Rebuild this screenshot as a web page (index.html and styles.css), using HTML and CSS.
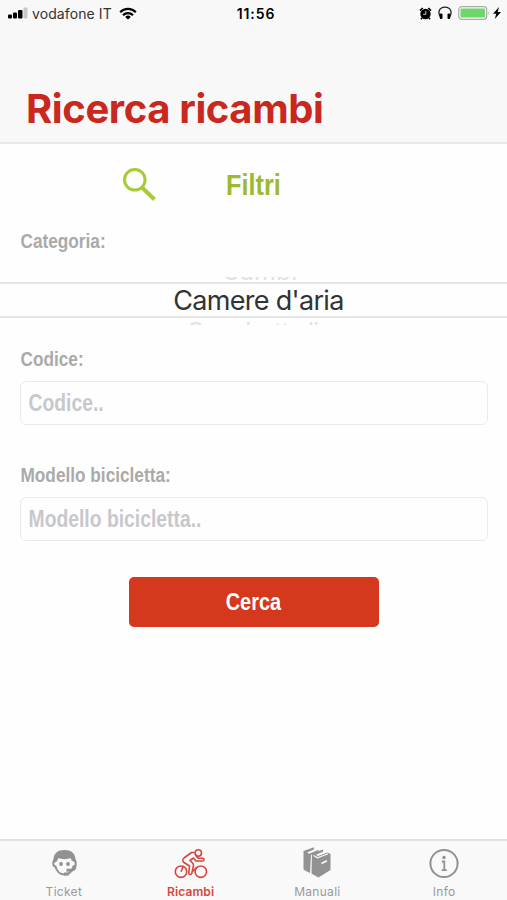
FILE: index.html
```html
<!DOCTYPE html>
<html lang="it">
<head>
  <meta charset="UTF-8">
  <title>Ricerca ricambi</title>
  <link rel="stylesheet" href="styles.css">
</head>
<body>

<div class="app">
  <header class="header">
    <div class="status-bar">
      <div class="status-left">
        <svg width="20" height="12" viewBox="0 0 20 12">
          <rect x="0" y="7.5" width="4" height="4" rx="1"/>
          <rect x="5" y="5.5" width="4" height="6" rx="1"/>
          <rect x="10" y="3" width="4.500" height="8.500" rx="1"/>
          <rect x="15.500" y="0.500" width="4" height="11" rx="1" fill="#c8c8c8"/>
        </svg>
        <span class="carrier">vodafone IT</span>
        <svg width="18" height="13" viewBox="0 0 18 13" fill="none" stroke="#000" stroke-width="2.200">
          <path d="M1.200 5.200a11 11 0 0 1 15.600 0M4 8.200a7 7 0 0 1 10 0"/>
          <path d="M9 12.500L6.200 9.900a4 4 0 0 1 5.600 0z" fill="#000" stroke="none"/>
        </svg>
      </div>
      <span class="time">11:56</span>
      <div class="status-right">
        <svg width="13" height="13" viewBox="0 0 13 13">
          <circle cx="6.500" cy="7" r="5.200"/>
          <path d="M1 3.700L3.700 1M12 3.700L9.300 1M3 11l-1 1.200M10 11l1 1.200" stroke="#000" stroke-width="1.700"/>
          <path d="M6.800 4v3.300H4.200" fill="none" stroke="#ccc"/>
        </svg>
        <svg width="14" height="14" viewBox="0 0 14 14">
          <path d="M2.800 12C-1 6 1.500 1.200 7 1.200S15 6 11.200 12" fill="none" stroke="#222" stroke-width="1.300"/>
          <rect x="1.800" y="7.500" width="2.700" height="5.500" rx="1"/>
          <rect x="9.500" y="7.500" width="2.700" height="5.500" rx="1"/>
        </svg>
        <svg class="battery" width="32" height="14" viewBox="0 0 32 14">
          <rect x="0.700" y="0.700" width="28" height="12.600" rx="3" fill="#f8f8f8" stroke="#aaa" stroke-width="1.200"/>
          <rect x="2.500" y="2.500" width="24.500" height="9" rx="1" fill="#6fd66b"/>
          <path d="M30 5q1.800 2 0 4z" fill="#aaa"/>
        </svg>
        <svg width="8" height="12" viewBox="0 0 8 12">
          <path d="M6 0L0 6.800h3.200L1.800 12 8 4.900H4.700z"/>
        </svg>
      </div>
    </div>
    <h1 class="title">Ricerca ricambi</h1>
  </header>

  <main class="content">
    <div class="filters">
      <svg class="search-icon" width="36" height="36" viewBox="0 0 36 36" fill="none" stroke="#a9c935">
        <circle cx="12.800" cy="12.800" r="10.300" stroke-width="3"/>
        <path d="M20 20.500L32.500 32.500" stroke-width="4"/>
      </svg>
      <h2 class="filters-title">Filtri</h2>
    </div>

    <form class="form">
      <div class="label">Categoria:</div>
      <!-- wheel picker: neighbours only peek out above and below the selected row -->
      <div class="picker">
        <div class="picker-prev"><span>Cambi</span></div>
        <div class="picker-current"><span>Camere d'aria</span></div>
        <div class="picker-next"><span>Caschetto/i</span></div>
      </div>

      <label class="label" for="codice">Codice:</label>
      <div class="field">
        <input type="text" id="codice" placeholder="Codice..">
      </div>

      <label class="label" for="modello">Modello bicicletta:</label>
      <div class="field">
        <input type="text" id="modello" placeholder="Modello bicicletta..">
      </div>

      <button class="submit" type="button"><span>Cerca</span></button>
    </form>
  </main>

  <nav class="tabs">
    <a class="tab">
      <svg width="34" height="34" viewBox="0 0 34 34">
        <path d="M6.500 17V14C6.500 7 11 4 17.500 4S28.500 7 28.500 14v3l-2-1.500c-1.500-.5-2.500-2-3-3.500-3 1.500-9 1.500-12 0-.5 1.500-1.500 3-2.500 4z" fill="#929292"/>
        <path d="M8.500 14c-3 0-3 6.500 0 6.500 1 4.500 4.500 8 9 8 4 0 8-3 9-8 3 0 3-6.500 0-6.500" fill="none" stroke="#929292" stroke-width="2"/>
        <path d="M28 19.500c0 5-4 5.300-8.500 4.500M22 28h-5" fill="none" stroke="#929292" stroke-width="3"/>
        <circle cx="14" cy="18" r="1.900" fill="#929292"/>
        <circle cx="21" cy="18" r="1.900" fill="#929292"/>
      </svg>
      <span>Ticket</span>
    </a>
    <a class="tab active">
      <svg width="34" height="34" viewBox="0 0 34 34" fill="none" stroke="#d7463c" stroke-width="1.600" stroke-linejoin="round">
        <circle cx="7" cy="25.700" r="5.700"/>
        <circle cx="26.800" cy="25.700" r="5.700"/>
        <circle cx="24.300" cy="7" r="3.200"/>
        <path d="M20.500 6.500h-3L10 12c-1.800 1.500-1.500 3.500 0 4.500l5.500 3.500-.7 7c0 2 2.500 2 3 .3l1.700-8c0-1-.5-2-1.200-2.500L16 14.500l3.500-2.500 2.500 3h6.500c2 0 2-2.700 0-2.700H24l-2.500-3.500"/>
        <path d="M7 25.700l2.500-6M18.500 25.500l4.500-4.500"/>
      </svg>
      <span>Ricambi</span>
    </a>
    <a class="tab">
      <svg width="34" height="34" viewBox="0 0 34 34" fill="#929292">
        <path d="M3.500 5L14 1.200v2.300L7 6.500l2 1.200L18 4l1 1-8 4-1 18-5-2.500c-1-.5-1.500-1-1.500-2z"/>
        <path d="M12 7.500L23 3.500v2.200l-7 3 2 1.300 9.500-3.500 3 1.500v16L18.500 31.500l-5.500-3c-1-.5-1.500-1-1.500-2z"/>
        <path d="M21.500 17.500l5.500-2.800" fill="none" stroke="#f8f8f8" stroke-width="1.800"/>
        <path d="M13.500 9.500l4 2.300 10.500-4" fill="none" stroke="#f8f8f8" stroke-width="1.200"/>
      </svg>
      <span>Manuali</span>
    </a>
    <a class="tab">
      <svg width="34" height="34" viewBox="0 0 34 34" fill="none" stroke="#929292">
        <circle cx="17" cy="17.500" r="13.600" stroke-width="2"/>
        <circle cx="17" cy="11.500" r="1.700" fill="#929292" stroke="none"/>
        <path d="M14.800 15.500H17.300V24M14.800 24.200h5" stroke-width="1.800"/>
      </svg>
      <span>Info</span>
    </a>
  </nav>
</div>

</body>
</html>
```

FILE: styles.css
```css
* {
  box-sizing: border-box;
}
body {
  margin: 0;
  background-color: #fefefe;
  font-family: Inter, sans-serif;
}
.app {
  display: flex;
  flex-direction: column;
  height: 900px;
}
.header {
  height: 144px;
  background-color: #f8f8f8;
  border-bottom: 2px solid #e9e9e9;
}
.status-bar {
  display: grid;
  grid-template-columns: 1fr auto 1fr;
  align-items: center;
  height: 26px;
  padding: 0 6px 0 8px;
  font-size: 14px;
}
.status-left, .status-right {
  display: flex;
  align-items: center;
}
.status-left {
  gap: 4px;
}
.carrier {
  color: #333;
  margin-right: 3px;
  letter-spacing: 0.1px;
}
.time {
  padding-left: 3px;
  font-weight: 600;
  letter-spacing: 0.9px;
}
.status-right {
  justify-content: flex-end;
  gap: 6px;
}
.battery {
  margin-right: -3px;
}
.title {
  margin: 58px 0 0 26px;
  font-size: 40px;
  line-height: 50px;
  font-weight: 700;
  letter-spacing: -0.4px;
  color: #c9281e;
}
.content {
  flex: 1;
}
.filters {
  display: grid;
  grid-template-columns: 1fr auto 1fr;
  height: 84px;
  padding-top: 22px;
}
.search-icon {
  margin: 1px 0 0 122px;
}
.filters-title {
  grid-column: 2;
  margin: 0;
  font: bold 29px/39px "Liberation Sans", sans-serif;
  color: #9bb931;
  transform: scaleX(0.87);
}
.label {
  display: block;
  padding-left: 20.5px;
  font: bold 21px/26px "Liberation Sans", sans-serif;
  color: #aaa;
  transform: scaleX(0.82);
  transform-origin: 20.5px 0;
}
.picker {
  margin: 23px 0 21px;
  text-align: center;
  font-size: 27px;
  letter-spacing: -0.7px;
}
.picker-prev, .picker-next {
  display: flex;
  justify-content: center;
  overflow: hidden;
  font-size: 25px;
  color: #e2e2e2;
}
.picker-prev {
  height: 5px;
  align-items: flex-end;
  padding-left: 12px;
  line-height: 22px;
  letter-spacing: 0;
}
.picker-next {
  height: 7px;
  padding-right: 2px;
  line-height: 29px;
  letter-spacing: -0.2px;
}
.picker-current {
  height: 36px;
  padding-left: 10px;
  border-top: 2px solid #e6e6e6;
  border-bottom: 2px solid #e6e6e6;
  line-height: 33px;
  color: #333;
}
.field {
  height: 44px;
  margin: 9px 19px 37px 20px;
  border: 1px solid #ebebeb;
  border-radius: 6px;
  overflow: hidden;
}
.field input {
  display: block;
  width: 118%;
  height: 42px;
  padding: 0 0 0 9px;
  border: none;
  background: none;
  font: bold 23px "Liberation Sans", sans-serif;
  transform: scaleX(0.84);
  transform-origin: left;
}
.field input::placeholder {
  color: #c8c8cc;
}
.submit {
  display: block;
  width: 250px;
  height: 50px;
  margin: -1px auto 0;
  border: none;
  border-radius: 5px;
  background-color: #d4381d;
  color: #fff;
  font: bold 24px "Liberation Sans", sans-serif;
}
.submit span {
  display: inline-block;
  transform: scaleX(0.83);
}
.tabs {
  display: grid;
  grid-template-columns: repeat(4, 1fr);
  height: 61px;
  border-top: 2px solid #e2e2e2;
  background-color: #f9f9f9;
}
.tab {
  display: flex;
  flex-direction: column;
  align-items: center;
  padding: 5px 0 0 1px;
  color: #999;
  font-size: 12px;
  line-height: 24px;
  letter-spacing: 0.3px;
}
.tab span {
  height: 20px;
}
.active {
  color: #d7463c;
  font-weight: 600;
  letter-spacing: 0.1px;
}
```
